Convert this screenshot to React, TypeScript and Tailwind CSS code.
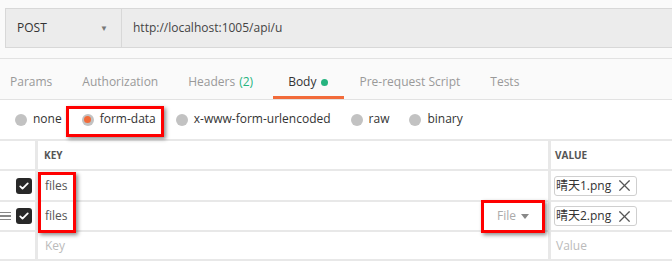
import { X } from "lucide-react";

const tabs = [
  { label: "Params" },
  { label: "Authorization" },
  { label: "Headers", count: "(2)" },
  { label: "Body", active: true },
  { label: "Pre-request Script" },
  { label: "Tests" },
];

const modes = ["none", "form-data", "x-www-form-urlencoded", "raw", "binary"];

function Check() {
  return (
    <div className="flex h-4 w-4 items-center justify-center rounded-[3px] bg-[#282828]">
      <svg viewBox="0 0 16 16" className="h-3 w-3">
        <path d="M3 8.5l3 3 7-7" fill="none" stroke="#fff" strokeWidth="2.4" strokeLinecap="round" strokeLinejoin="round" />
      </svg>
    </div>
  );
}

function Handle() {
  return (
    <div className="flex w-[11px] flex-col gap-[2px]">
      <div className="h-[1.5px] bg-[#888]" />
      <div className="h-[1.5px] bg-[#888]" />
      <div className="h-[1.5px] bg-[#888]" />
    </div>
  );
}

function Chip({ name }: { name: string }) {
  return (
    <div className="flex h-[20px] w-[83px] items-center justify-between rounded-[3px] border border-[#cfcfcf] bg-white pl-[1px] pr-[2px] text-[12px] text-[#333]">
      <span className="font-['Open_Sans','Noto_Sans_CJK_SC',sans-serif]">{name}</span>
      <X size={19} strokeWidth={1.5} className="text-[#555]" />
    </div>
  );
}

export default function App() {
  return (
    <div className="relative h-[264px] w-[672px] overflow-hidden bg-white font-['Open_Sans',sans-serif] text-[12px]">
      <div className="h-[59px] border-b border-[#e2e2e2] bg-[#fafafa] pl-[5px] pt-[8px]">
        <div className="flex h-[40px] border border-r-0 border-[#d8d8d8] bg-[#ececec]">
          <div className="flex w-[116px] items-center justify-between border-r border-[#d8d8d8] pl-[11px] pr-[13px] text-[#333]">
            <span>POST</span>
            <span className="text-[8px] text-[#777]">▼</span>
          </div>
          <div className="flex items-center pl-[11px] text-[#444]">http://localhost:1005/api/u</div>
        </div>
      </div>

      <div className="flex h-[41px] border-b border-[#e2e2e2] bg-[#fafafa]">
        {tabs.map((t) => (
          <div
            key={t.label}
            className={`flex items-center ${t.active ? "border-b-[3px] border-[#f26b3a] pl-[15px] pr-[16px] pt-[9px] text-[#333]" : "px-[15px] pt-[6px] text-[#999]"} ${t.label === "Params" ? "pl-[10px]" : ""} ${t.count ? "pr-[20px]" : ""}`}
          >
            {t.label}
            {t.count && <span className="ml-1 text-[#26b47f]">{t.count}</span>}
            {t.active && <span className="ml-[5px] h-[7px] w-[7px] rounded-full bg-[#26b47f]" />}
          </div>
        ))}
      </div>

      <div className="flex h-[39px] items-center gap-[20px] pl-[15px] text-[#333]">
        {modes.map((m) => (
          <div key={m} className="flex items-center gap-[6px]">
            <span className="flex h-[12px] w-[12px] items-center justify-center rounded-full bg-[#c2c2c2]">
              {m === "form-data" && <span className="h-[7px] w-[7px] rounded-full bg-[#f26b3a]" />}
            </span>
            <span className="pb-[1px]">{m}</span>
          </div>
        ))}
      </div>

      <div className="grid grid-cols-[38px_513px_121px] border-t-2 border-[#e8e8e8] text-[#555]">
        <div className="h-[30px] border-b-2 border-r-[3px] border-[#e8e8e8]" />
        <div className="flex h-[30px] items-center border-b-2 border-r-[3px] border-[#e8e8e8] pl-[6px] text-[10px] font-bold">KEY</div>
        <div className="flex h-[30px] items-center border-b-2 border-[#e8e8e8] pl-[4px] text-[10px] font-bold">VALUE</div>

        <div className="flex h-[31px] items-center justify-end border-b-2 border-r-[3px] border-[#e8e8e8] pr-[3px]">
          <Check />
        </div>
        <div className="flex h-[31px] items-center border-b-2 border-r-[3px] border-[#e8e8e8] pl-[7px]">files</div>
        <div className="flex h-[31px] items-center border-b-2 border-[#e8e8e8] pl-[3px]">
          <Chip name="晴天1.png" />
        </div>

        <div className="flex h-[30px] items-center justify-between border-b-2 border-r-[3px] border-[#e8e8e8] pr-[3px]">
          <Handle />
          <Check />
        </div>
        <div className="flex h-[30px] items-center justify-between border-b-2 border-r-[3px] border-[#e8e8e8] pl-[7px] pr-[19px]">
          <span>files</span>
          <span className="flex items-center gap-[5px] text-[#aaa]">
            File
            <svg viewBox="0 0 8 5" className="h-[5px] w-[8px]">
              <path d="M0 0h8L4 5z" fill="#888" />
            </svg>
          </span>
        </div>
        <div className="flex h-[30px] items-center border-b-2 border-[#e8e8e8] pl-[3px]">
          <Chip name="晴天2.png" />
        </div>

        <div className="h-[29px] border-b-2 border-r-[3px] border-[#e8e8e8]" />
        <div className="flex h-[29px] items-center border-b-2 border-r-[3px] border-[#e8e8e8] pl-[7px] text-[#bbb]">Key</div>
        <div className="flex h-[29px] items-center border-b-2 border-[#e8e8e8] pl-[5px] text-[#bbb]">Value</div>
      </div>

      <div className="absolute left-[66px] top-[106px] h-[31px] w-[98px] border-[3px] border-[#ff0000] shadow-[2px_2px_4px_rgba(0,0,0,0.45)]" />
      <div className="absolute left-[38px] top-[172px] h-[61px] w-[38px] border-[3px] border-[#ff0000] shadow-[2px_2px_4px_rgba(0,0,0,0.45)]" />
      <div className="absolute left-[481px] top-[200px] h-[33px] w-[64px] border-[3px] border-[#ff0000] shadow-[2px_2px_4px_rgba(0,0,0,0.45)]" />
    </div>
  );
}
